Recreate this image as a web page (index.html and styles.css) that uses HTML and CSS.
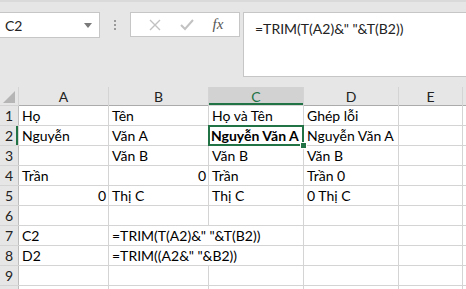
FILE: index.html
```html
<!DOCTYPE html>
<html>
  <head>
    <title>TRIM</title>
    <link rel="stylesheet" href="styles.css">
  </head>
  <body>
    <div class="app">
      <div class="toolbar">
        <div class="name-box">
          <span>C2</span>
          <svg class="caret" width="8" height="5" viewBox="0 0 8 5"><path d="M0 0h8L4 5z" fill="#7a7a7a"/></svg>
        </div>
        <div class="grip"><i></i><i></i><i></i></div>
        <div class="fx-buttons">
          <svg width="12" height="12" viewBox="0 0 12 12"><path d="M1 1l10 10M11 1L1 11" stroke="#c2c2c2" stroke-width="1.4"/></svg>
          <svg width="14" height="12" viewBox="0 0 14 12"><path d="M1 6l4 4 8-9" fill="none" stroke="#c2c2c2" stroke-width="2"/></svg>
          <span class="fx">fx</span>
        </div>
        <div class="formula">=TRIM(T(A2)&amp;" "&amp;T(B2))</div>
      </div>

      <div class="sheet">
        <div class="corner"></div>
        <div class="col-head">A</div>
        <div class="col-head">B</div>
        <div class="col-head active">C</div>
        <div class="col-head">D</div>
        <div class="col-head">E</div>
        <div class="col-head"></div>

        <div class="row-head">1</div>
        <div class="cell">Họ</div>
        <div class="cell">Tên</div>
        <div class="cell">Họ và Tên</div>
        <div class="cell">Ghép lỗi</div>
        <div class="cell"></div>
        <div class="cell"></div>

        <div class="row-head active">2</div>
        <div class="cell">Nguyễn</div>
        <div class="cell">Văn A</div>
        <div class="cell bold selected">Nguyễn Văn A</div>
        <div class="cell">Nguyễn Văn A</div>
        <div class="cell"></div>
        <div class="cell"></div>

        <div class="row-head">3</div>
        <div class="cell"></div>
        <div class="cell">Văn B</div>
        <div class="cell">Văn B</div>
        <div class="cell">Văn B</div>
        <div class="cell"></div>
        <div class="cell"></div>

        <div class="row-head">4</div>
        <div class="cell">Trần</div>
        <div class="cell num">0</div>
        <div class="cell">Trần</div>
        <div class="cell">Trần 0</div>
        <div class="cell"></div>
        <div class="cell"></div>

        <div class="row-head">5</div>
        <div class="cell num">0</div>
        <div class="cell">Thị C</div>
        <div class="cell">Thị C</div>
        <div class="cell">0 Thị C</div>
        <div class="cell"></div>
        <div class="cell"></div>

        <div class="row-head">6</div>
        <div class="cell"></div>
        <div class="cell"></div>
        <div class="cell"></div>
        <div class="cell"></div>
        <div class="cell"></div>
        <div class="cell"></div>

        <div class="row-head">7</div>
        <div class="cell">C2</div>
        <div class="cell wide">=TRIM(T(A2)&amp;" "&amp;T(B2))</div>
        <div class="cell"></div>
        <div class="cell"></div>
        <div class="cell"></div>

        <div class="row-head">8</div>
        <div class="cell">D2</div>
        <div class="cell wide">=TRIM((A2&amp;" "&amp;B2))</div>
        <div class="cell"></div>
        <div class="cell"></div>
        <div class="cell"></div>

        <div class="row-head">9</div>
        <div class="cell"></div>
        <div class="cell"></div>
        <div class="cell"></div>
        <div class="cell"></div>
        <div class="cell"></div>
        <div class="cell"></div>

        <div class="row-head"></div>
        <div class="cell"></div>
        <div class="cell"></div>
        <div class="cell"></div>
        <div class="cell"></div>
        <div class="cell"></div>
        <div class="cell"></div>
      </div>
    </div>
  </body>
</html>
```

FILE: styles.css
```css
body{
  margin: 0;
  font-family: Lato, "Noto Sans", sans-serif;
  color: #000;
}
.app{
  width: 466px;
  height: 289px;
  overflow: hidden;
  background-color: #e6e6e6;
}

/* formula bar */
.toolbar{
  display: flex;
  align-items: flex-start;
  height: 87px;
  box-sizing: border-box;
  padding-top: 10px;
  border-top: 2px solid #dadada;
}
.name-box{
  display: flex;
  align-items: center;
  justify-content: space-between;
  width: 100px;
  height: 26px;
  box-sizing: border-box;
  padding: 0 7px 0 5px;
  background-color: white;
  border: 1px solid #c6c6c6;
  border-left: none;
  font-size: 14px;
  color: #222;
}
.grip{
  display: flex;
  flex-direction: column;
  align-items: center;
  gap: 2px;
  width: 30px;
  padding-top: 8px;
}
.grip i{
  width: 2px;
  height: 2px;
  background-color: #9a9a9a;
}
.fx-buttons{
  display: flex;
  align-items: center;
  justify-content: space-around;
  width: 110px;
  height: 25px;
  box-sizing: border-box;
  padding: 0 6px 0 8px;
  background-color: white;
  border: 1px solid #c6c6c6;
}
.fx{
  font-family: "Liberation Serif", serif;
  font-style: italic;
  font-size: 15px;
  color: #555;
}
.formula{
  flex: 1;
  height: 65px;
  margin-left: 3px;
  box-sizing: border-box;
  padding: 6px 0 0 11px;
  background-color: white;
  border: 1px solid #c6c6c6;
  border-right: none;
  font-size: 14px;
  line-height: 20px;
  color: #222;
}

/* sheet grid */
.sheet{
  display: grid;
  grid-template-columns: 18px 89px 99px 94px 94px 63px 10px;
  grid-template-rows: 18px;
  grid-auto-rows: 19px;
  gap: 1px;
  background-color: #d4d4d4;
  font-size: 14px;
}
.corner{
  position: relative;
  background-color: #e6e6e6;
}
.corner::after{
  content: "";
  position: absolute;
  right: 3px;
  bottom: 2px;
  width: 12px;
  height: 12px;
  background-color: #b5b5b5;
  clip-path: polygon(100% 0, 100% 100%, 0 100%);
}
.col-head{
  display: flex;
  align-items: center;
  justify-content: center;
  background-color: #e6e6e6;
  box-shadow: 0 1px 0 #ababab;
  color: #222;
}
.col-head.active{
  background-color: #d2d2d2;
  color: #217346;
  box-shadow: inset 0 -2px 0 #217346;
}
.row-head{
  display: flex;
  align-items: center;
  justify-content: center;
  background-color: #e6e6e6;
  box-shadow: 1px 0 0 #bdbdbd;
  color: #222;
}
.row-head.active{
  box-shadow: inset -2px 0 0 #217346;
}
.cell{
  display: flex;
  align-items: center;
  padding: 0 2px 0 3px;
  background-color: white;
  white-space: nowrap;
  overflow: visible;
}
.num{
  justify-content: flex-end;
}
.wide{
  grid-column: span 2;
}
.bold{
  font-weight: bold;
}
.selected{
  position: relative;
  padding-left: 2px;
}
.selected::after{
  content: "";
  position: absolute;
  left: -1px;
  top: -1px;
  right: -1px;
  bottom: -1px;
  border: 2px solid #217346;
}
.selected::before{
  content: "";
  position: absolute;
  right: -4px;
  bottom: -4px;
  width: 5px;
  height: 5px;
  background-color: #217346;
  border: 1px solid white;
  z-index: 1;
}
```
